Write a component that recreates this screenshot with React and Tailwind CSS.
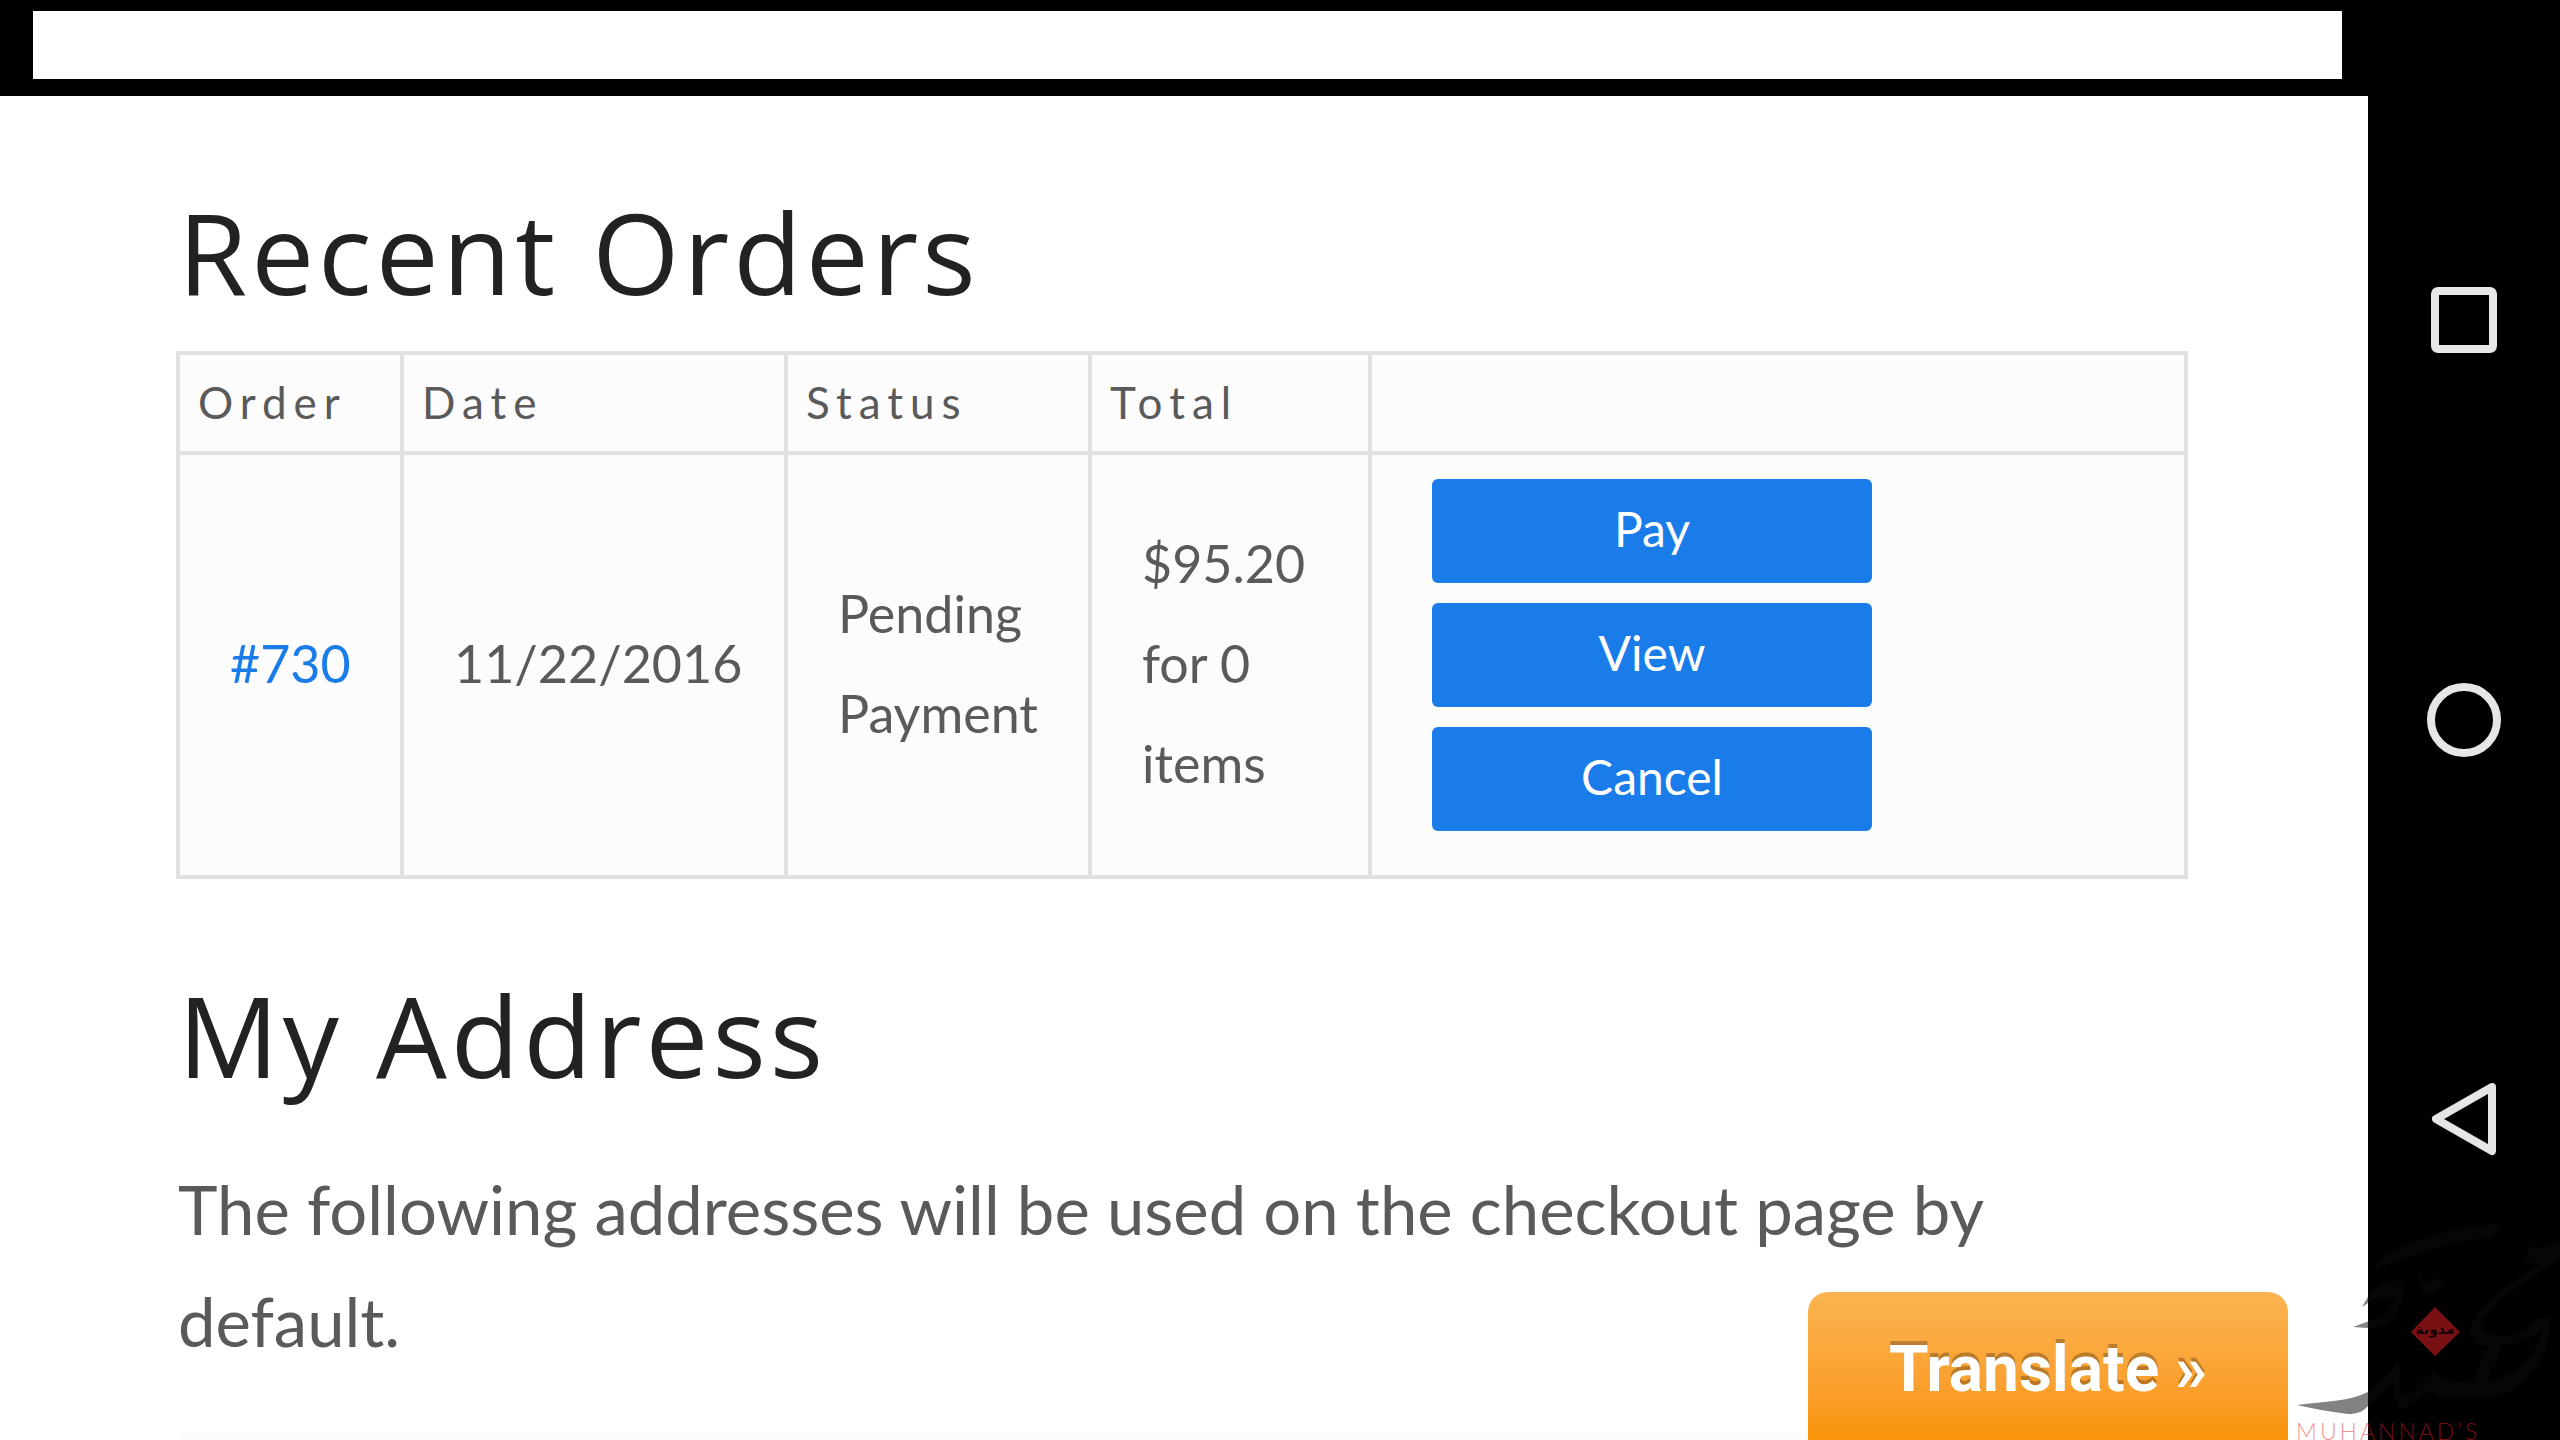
const headers = ["Order", "Date", "Status", "Total", ""];
const actions = ["Pay", "View", "Cancel"];

function StatusBar() {
  return (
    <header className="bg-black pt-[11px] pb-[17px] pl-[33px] pr-[26px]">
      <div className="h-[68px] bg-white" />
    </header>
  );
}

function OrdersTable() {
  return (
    <table className="w-full table-fixed border-collapse border-4 border-[#e1e1e1] bg-[#fcfcfc] text-[#5a5a5a]">
      <colgroup>
        <col className="w-[224px]" />
        <col className="w-[384px]" />
        <col className="w-[304px]" />
        <col className="w-[280px]" />
        <col />
      </colgroup>
      <thead>
        <tr className="h-[100px]">
          {headers.map((label) => (
            <th
              key={label}
              scope="col"
              className="border-4 border-[#e1e1e1] px-[18px] pt-0 pb-0.5 text-left text-[44px] leading-[94px] font-normal tracking-[7px]"
            >
              {label}
            </th>
          ))}
        </tr>
      </thead>
      <tbody className="text-[52px] leading-[100px]">
        <tr className="h-[424px]">
          <td className="border-4 border-[#e1e1e1] pb-1 pl-[50px]">
            <a href="#order-730" className="text-[#1a7ce9]">#730</a>
          </td>
          <td className="border-4 border-[#e1e1e1] pb-1 pl-[50px]">11/22/2016</td>
          <td className="border-4 border-[#e1e1e1] pb-1 pl-[50px]">Pending Payment</td>
          <td className="border-4 border-[#e1e1e1] pb-1 pl-[50px]">
            $95.20
            <br />
            for 0
            <br />
            items
          </td>
          <td className="border-4 border-[#e1e1e1] pl-[60px] align-top">
            <div className="flex flex-col gap-5 pt-6">
              {actions.map((label) => (
                <button
                  key={label}
                  type="button"
                  className="h-[104px] w-[440px] rounded-md bg-[#1a7ce9] pb-1 text-[48px] leading-[100px] text-white"
                >
                  {label}
                </button>
              ))}
            </div>
          </td>
        </tr>
      </tbody>
    </table>
  );
}

function SystemNav() {
  return (
    <nav className="flex w-48 shrink-0 flex-col items-center justify-between bg-black py-[280px] text-[#e6e6e6]">
      <button type="button" aria-label="Recent apps">
        <svg width="80" height="80" viewBox="0 0 80 80" fill="none" stroke="currentColor" strokeWidth="8">
          <rect x="11" y="11" width="58" height="58" rx="3" />
        </svg>
      </button>
      <button type="button" aria-label="Home">
        <svg width="80" height="80" viewBox="0 0 80 80" fill="none" stroke="currentColor" strokeWidth="8">
          <circle cx="40" cy="40" r="33" />
        </svg>
      </button>
      <button type="button" aria-label="Back">
        <svg width="80" height="80" viewBox="0 0 80 80" fill="none" stroke="currentColor" strokeWidth="8" strokeLinejoin="round">
          <path d="M68 7 L12 39 L68 71 Z" />
        </svg>
      </button>
    </nav>
  );
}

function Watermark() {
  return (
    <div className="pointer-events-none absolute right-0 bottom-0 h-[240px] w-[300px] overflow-hidden">
      <svg width="300" height="240" viewBox="0 0 300 240">
        <g fill="#040706" fillOpacity="0.5">
          <path d="M102 107 L109 95 L108 103 Z M93 127 L112 120 L108 128 Z" />
          <path d="M37 205 C65 201 88 202 108 192 L108 206 C103 212 97 214 88 214 C71 212 54 209 37 205 Z" />
        </g>
        {/* strokes that run over the black bar */}
        <g fill="#040706">
          <path d="M114 71 C116 62 120 57 131 52 C165 36 203 25 243 24 C239 31 234 36 230 41 L229 37 C190 43 148 55 114 71 Z" />
          <path d="M108 97 C117 80 132 78 145 83 C143 104 136 117 125 124 C119 128 114 128 108 128 L108 121 C123 117 132 110 135 99 C126 98 115 98 108 103 Z" />
          <path d="M162 66 C160 82 163 86 169 83 L175 77 C182 86 190 82 193 64 C190 82 180 94 169 94 C157 94 158 75 162 66 Z" />
          <path d="M108 192 C122 183 132 170 139 158 L140 190 C142 201 149 195 156 188 L175 169 C182 185 195 182 213 181 L222 160 C228 145 236 135 241 140 C242 153 235 166 226 182 C251 179 278 157 282 129 C266 145 236 149 216 144 C205 132 213 118 222 108 C240 86 270 72 279 64 L264 62 L270 46 C281 50 292 43 300 40 L300 57 C279 76 232 98 220 124 C229 142 267 137 277 118 L289 118 C294 156 263 196 225 199 C216 197 209 194 201 197 C184 202 174 198 169 190 C161 199 151 208 141 208 C133 202 134 190 132 182 C124 190 118 196 108 206 Z" />
        </g>
        <path d="M175 107 L200 132 L175 156 L151 132 Z" fill="#791114" />
        <text x="175" y="134" textAnchor="middle" fontSize="14" fontWeight="bold" fontFamily="DejaVu Sans, sans-serif" fill="#160203">
          مدونة
        </text>
        <text x="36" y="240" fontSize="23" letterSpacing="3" fontFamily="Lato, sans-serif" fontWeight="300" fill="#ed1c24" fillOpacity="0.5">
          MUHANNAD’S
        </text>
      </svg>
    </div>
  );
}

export default function App() {
  return (
    <div className="relative flex h-screen overflow-hidden bg-white font-['Lato',sans-serif]">
      <div className="flex min-w-0 flex-1 flex-col">
        <StatusBar />
        <main className="pt-20 pr-[180px] pl-[176px]">
          <h2 className="mb-[23px] pl-0.5 font-['Open_Sans',sans-serif] text-[112px] leading-[152px] tracking-[4px] text-[#222]">
            Recent Orders
          </h2>
          <OrdersTable />
          <h2 className="mt-20 pl-0.5 font-['Open_Sans',sans-serif] text-[112px] leading-[152px] tracking-[4px] text-[#222]">
            My Address
          </h2>
          <p className="mt-[42px] pl-0.5 text-[67px] leading-[112px] text-[#5a5a5a]">
            The following addresses will be used on the checkout page by default.
          </p>
          <div className="mx-0.5 mt-14 h-40 rounded-t-md bg-[#fbfbfb]" />
        </main>
      </div>
      <SystemNav />
      <button
        type="button"
        className="absolute right-[272px] bottom-0 h-[148px] w-[480px] rounded-t-[20px] bg-linear-to-b from-[#fbb450] to-[#f99406] pt-2 font-['Roboto',sans-serif] text-[64px] leading-[140px] font-bold text-white [text-shadow:0_-4px_0_rgba(0,0,0,0.25)]"
      >
        Translate »
      </button>
      <Watermark />
    </div>
  );
}
